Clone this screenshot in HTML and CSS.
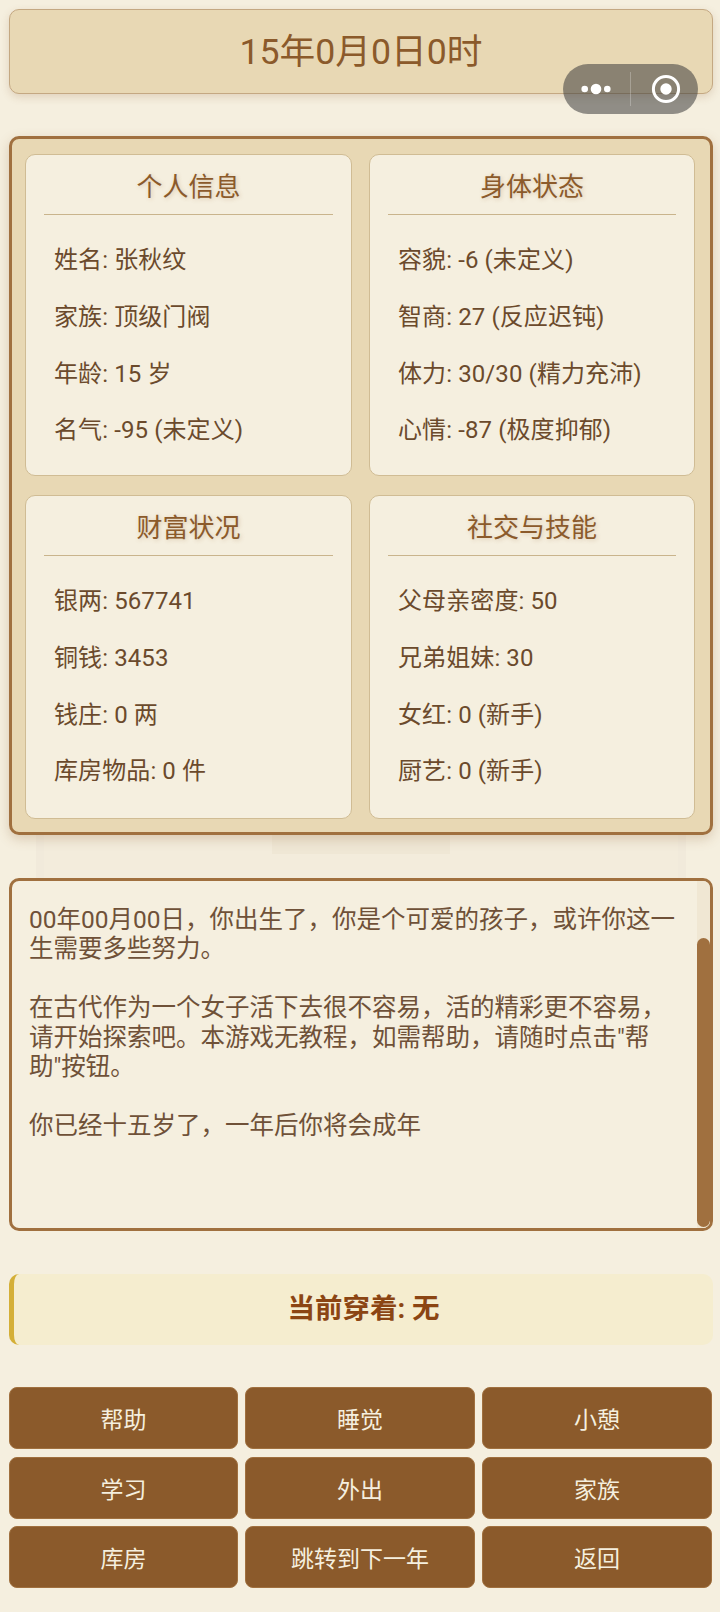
FILE: index.html
```html
<!DOCTYPE html>
<html lang="zh-CN">
<head>
    <meta charset="UTF-8">
    <title>人生</title>
    <link rel="stylesheet" href="styles.css">
</head>
<body>
    <header class="date-bar">15年0月0日0时</header>

    <!-- 小程序右上角胶囊 -->
    <div class="capsule">
        <svg class="capsule-more" width="36" height="16" viewBox="0 0 36 16">
            <circle cx="5.7" cy="8" r="3.3" fill="#fff"/>
            <circle cx="17" cy="8" r="5.3" fill="#fff"/>
            <circle cx="28.3" cy="8" r="3.3" fill="#fff"/>
        </svg>
        <span class="capsule-line"></span>
        <svg class="capsule-close" width="32" height="32" viewBox="0 0 32 32">
            <circle cx="16" cy="16" r="12.6" fill="none" stroke="#fff" stroke-width="3"/>
            <circle cx="16" cy="16" r="5.7" fill="#fff"/>
        </svg>
    </div>

    <section class="stats">
        <div class="card">
            <h3>个人信息</h3>
            <p>姓名: 张秋纹</p>
            <p>家族: 顶级门阀</p>
            <p>年龄: 15 岁</p>
            <p>名气: -95 (未定义)</p>
        </div>
        <div class="card">
            <h3>身体状态</h3>
            <p>容貌: -6 (未定义)</p>
            <p>智商: 27 (反应迟钝)</p>
            <p>体力: 30/30 (精力充沛)</p>
            <p>心情: -87 (极度抑郁)</p>
        </div>
        <div class="card">
            <h3>财富状况</h3>
            <p>银两: 567741</p>
            <p>铜钱: 3453</p>
            <p>钱庄: 0 两</p>
            <p>库房物品: 0 件</p>
        </div>
        <div class="card">
            <h3>社交与技能</h3>
            <p>父母亲密度: 50</p>
            <p>兄弟姐妹: 30</p>
            <p>女红: 0 (新手)</p>
            <p>厨艺: 0 (新手)</p>
        </div>
    </section>

    <!-- 面板下面透出来的浅色层 -->
    <div class="under-layer"><span class="under-tab"></span></div>

    <section class="log">
        <div class="log-text">
            <p>00年00月00日，你出生了，你是个可爱的孩子，或许你这一生需要多些努力。</p>
            <p>在古代作为一个女子活下去很不容易，活的精彩更不容易，请开始探索吧。本游戏无教程，如需帮助，请随时点击"帮助"按钮。</p>
            <p>你已经十五岁了，一年后你将会成年</p>
        </div>
        <div class="log-track"><span class="log-thumb"></span></div>
    </section>

    <div class="wearing">当前穿着: 无</div>

    <nav class="actions">
        <button>帮助</button>
        <button>睡觉</button>
        <button>小憩</button>
        <button>学习</button>
        <button>外出</button>
        <button>家族</button>
        <button>库房</button>
        <button>跳转到下一年</button>
        <button>返回</button>
    </nav>
</body>
</html>
```

FILE: styles.css
```css
* {
    box-sizing: border-box;
}
body {
    margin: 0;
    padding: 9px 7px 0 9px;
    height: 1612px;
    overflow: hidden;
    position: relative;
    background-color: #f5efdf;
    color: #6b4a2c;
    font-family: Roboto, "Noto Sans CJK SC", sans-serif;
    font-size: 24px;
}
.date-bar {
    height: 85px;
    line-height: 84px;
    text-align: center;
    font-size: 35.7px;
    color: #8b5a2b;
    background-color: #e8d8b4;
    border: 1px solid #c4a882;
    border-radius: 10px;
    box-shadow: 0 3px 8px rgba(139, 90, 43, 0.2);
}
.capsule {
    position: absolute;
    left: 563px;
    top: 64px;
    width: 135px;
    height: 50px;
    border-radius: 25px;
    background-color: rgba(60, 60, 60, 0.55);
    display: flex;
    align-items: center;
}
.capsule-more {
    margin-left: 16px;
}
.capsule-line {
    width: 1px;
    height: 34px;
    margin-left: 15px;
    background-color: rgba(255, 255, 255, 0.25);
}
.capsule-close {
    margin-left: 19px;
}
.stats {
    position: relative;
    margin-top: 42px;
    height: 699px;
    padding: 15px 13px;
    display: grid;
    grid-template-columns: 327px 326px;
    grid-template-rows: 322px 324px;
    gap: 19px 17px;
    background-color: #e8d8b4;
    border: 3px solid #a0703f;
    border-radius: 10px;
    box-shadow: 0 4px 12px rgba(139, 90, 43, 0.25);
}
.card {
    padding: 0 18px;
    background-color: #f5efdf;
    border: 1px solid #d0bc94;
    border-radius: 10px;
}
.card h3 {
    margin: 0 0 17px 0;
    height: 60px;
    line-height: 64px;
    text-align: center;
    font-size: 26px;
    font-weight: 400;
    color: #8b5a2b;
    text-shadow: 1px 1px 4px rgba(160, 112, 63, 0.3);
    border-bottom: 1px solid #c9b48c;
}
.card p {
    margin: 0;
    padding-left: 10px;
    height: 56.8px;
    line-height: 56.8px;
    letter-spacing: 0.1px;
    white-space: nowrap;
}
.under-layer {
    height: 43px;
    margin: 0 27px;
    display: flex;
    justify-content: center;
    background-color: #f3ecdc;
    border-left: 8px solid #f1eadb;
    border-right: 8px solid #f1eadb;
}
.under-tab {
    width: 178px;
    height: 19px;
    background-color: #efe7d5;
}
.log {
    height: 353px;
    position: relative;
    padding: 24px 32px 0 17px;
    background-color: #f5efdf;
    border: 3px solid #a0703f;
    border-radius: 10px;
    overflow: hidden;
}
.log-text {
    font-size: 24.5px;
    line-height: 29.4px;
    color: #6f5138;
}
.log-text p {
    margin: 0 0 29.4px 0;
}
.log-track {
    position: absolute;
    right: 0;
    top: 0;
    bottom: 0;
    width: 13px;
    background-color: #f0e7d3;
}
.log-thumb {
    position: absolute;
    left: 0;
    right: 0;
    top: 57px;
    height: 289px;
    background-color: #a0703f;
    border-radius: 7px;
}
.wearing {
    margin-top: 43px;
    height: 71px;
    line-height: 70px;
    text-align: center;
    font-weight: 700;
    font-size: 27.5px;
    color: #8b4513;
    background-color: #f5edcf;
    border-left: 5px solid #d4af37;
    border-radius: 10px;
}
.actions {
    margin-top: 42px;
    display: grid;
    grid-template-columns: 229px 230px 230px;
    grid-auto-rows: 62px;
    gap: 7.5px 7px;
}
.actions button {
    padding: 0;
    font-family: inherit;
    font-size: 23px;
    color: #f5efdf;
    background-color: #8b5a2b;
    border: 1px solid #a0703f;
    border-radius: 8px;
}
```
